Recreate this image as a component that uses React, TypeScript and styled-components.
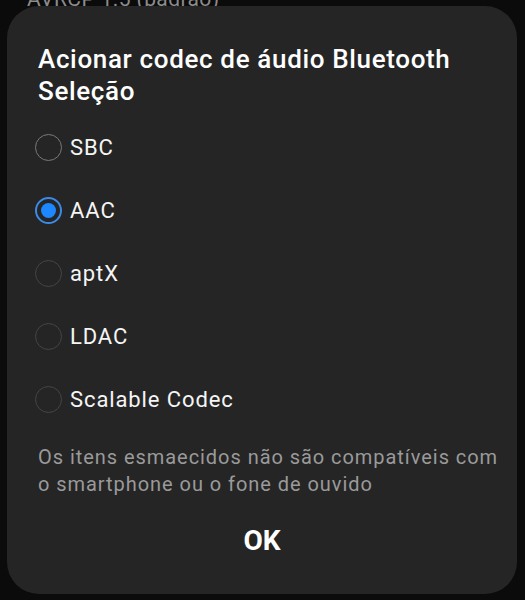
import { useState } from "react";
import styled, { createGlobalStyle } from "styled-components";

const GlobalStyle = createGlobalStyle`
  html, body {
    margin: 0;
    padding: 0;
    background: #0b0b0b;
    font-family: Roboto, "Noto Sans", "Liberation Sans", sans-serif;
    overflow: hidden;
  }
`;

const codecs = [
  { id: "sbc", label: "SBC", disabled: false },
  { id: "aac", label: "AAC", disabled: false },
  { id: "aptx", label: "aptX", disabled: true },
  { id: "ldac", label: "LDAC", disabled: true },
  { id: "scalable", label: "Scalable Codec", disabled: true },
];

export default function App() {
  const [selected, setSelected] = useState("aac");

  return (
    <>
      <GlobalStyle />
      <BackgroundPage>
        <BackgroundText $top>AVRCP 1.5 (padrão)</BackgroundText>
        <BackgroundText>Qualidade de reprodução</BackgroundText>
      </BackgroundPage>

      <Dialog role="dialog">
        <Title>
          Acionar codec de áudio Bluetooth
          <br />
          Seleção
        </Title>

        <OptionList>
          {codecs.map((c) => (
            <Option key={c.id} onClick={() => !c.disabled && setSelected(c.id)}>
              <RadioCircle $checked={selected === c.id} $disabled={c.disabled} />
              <OptionLabel>{c.label}</OptionLabel>
            </Option>
          ))}
        </OptionList>

        <Note>
          Os itens esmaecidos não são compatíveis com
          <br />o smartphone ou o fone de ouvido
        </Note>

        <OkButton>OK</OkButton>
      </Dialog>
    </>
  );
}

const BackgroundPage = styled.div`
  height: 100vh;
  display: flex;
  flex-direction: column;
  justify-content: space-between;
  padding: 0 27px;
  box-sizing: border-box;
`;

const BackgroundText = styled.div<{ $top?: boolean }>`
  color: #8c8c8c;
  font-size: 21px;
  line-height: 26px;
  letter-spacing: 0.4px;
  margin-top: ${(p) => (p.$top ? "-14px" : "0")};
  margin-bottom: ${(p) => (p.$top ? "0" : "-22px")};
`;

const Dialog = styled.div`
  position: fixed;
  top: 6px;
  left: 7px;
  width: 510px;
  height: 588px;
  box-sizing: border-box;
  background: #252525;
  border-radius: 32px;
  padding: 37px 0 0;
  display: flex;
  flex-direction: column;
`;

const Title = styled.h2`
  margin: 0;
  padding: 0 31px;
  color: #ffffff;
  font-size: 26px;
  font-weight: 500;
  letter-spacing: 0.65px;
  line-height: 32px;
`;

const OptionList = styled.div`
  margin-top: 9px;
  display: flex;
  flex-direction: column;
`;

const Option = styled.label`
  height: 63px;
  display: flex;
  align-items: center;
  gap: 8px;
  padding: 0 28px;
  cursor: pointer;
`;

const RadioCircle = styled.span<{ $checked: boolean; $disabled: boolean }>`
  width: 27px;
  height: 27px;
  box-sizing: border-box;
  border-radius: 50%;
  border: ${(p) =>
    p.$checked
      ? "2px solid #3a8ae8"
      : `1.5px solid ${p.$disabled ? "#454545" : "#7a7a7a"}`};
  display: flex;
  align-items: center;
  justify-content: center;
  flex-shrink: 0;

  &::after {
    content: "";
    width: 15px;
    height: 15px;
    border-radius: 50%;
    background: #1d87ff;
    display: ${(p) => (p.$checked ? "block" : "none")};
  }
`;

const OptionLabel = styled.span`
  color: #f5f5f5;
  font-size: 22px;
  letter-spacing: 0.9px;
`;

const Note = styled.p`
  margin: 13px 0 0;
  padding: 0 8px 0 31px;
  color: #9a9a9a;
  font-size: 20px;
  letter-spacing: 0.95px;
  line-height: 27px;
  white-space: nowrap;
`;

const OkButton = styled.button`
  margin: 14px auto 0;
  height: 56px;
  padding: 0 40px;
  background: transparent;
  border: none;
  color: #ffffff;
  font-family: inherit;
  font-size: 28px;
  font-weight: 700;
  cursor: pointer;
`;
